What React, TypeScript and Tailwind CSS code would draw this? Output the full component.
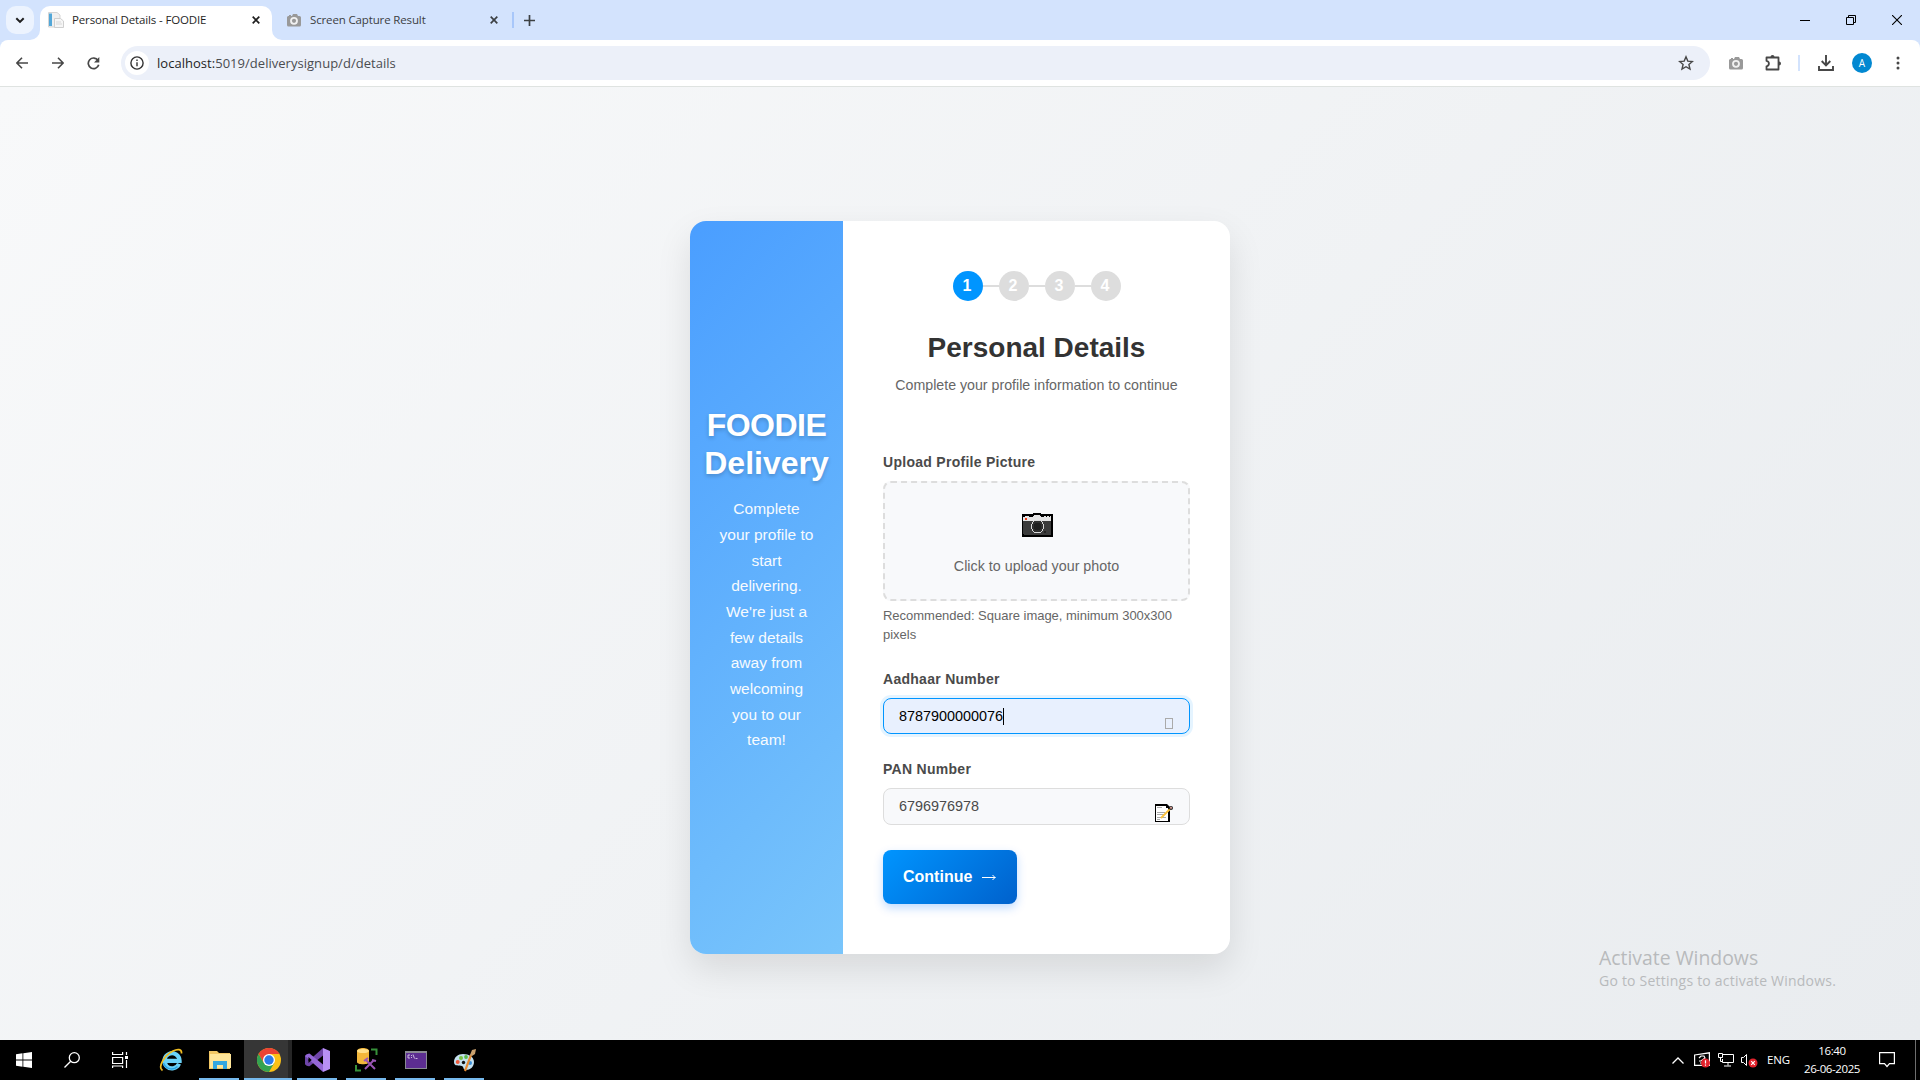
import React from "react";

const ui = "font-['Open_Sans','Noto_Sans',sans-serif]";

function CloseX({ color }: { color: string }) {
  return (
    <svg width="8" height="8" viewBox="0 0 8 8" stroke={color} strokeWidth="1.7">
      <path d="M.7 .7 7.3 7.3M7.3 .7.7 7.3" />
    </svg>
  );
}

function GrayCamera() {
  return (
    <svg width="14" height="14" viewBox="0 0 14 14">
      <path d="M1 3h1V2h2v1h1l1-2h4l1 2h1.500a1.500 1.500 0 0 1 1.500 1.500V12a1.500 1.500 0 0 1-1.500 1.500h-11A1.500 1.500 0 0 1 0 12V4z" fill="#999" />
      <circle cx="7" cy="7.800" r="3.900" fill="#f1f1f1" />
      <circle cx="7" cy="7.800" r="2.100" fill="#999" />
    </svg>
  );
}

function TabStrip() {
  return (
    <div className="flex h-10 w-full bg-[#d3e3fd]">
      <div className="mt-1.5 ml-1.5 flex size-7 shrink-0 items-center justify-center rounded-[10px] bg-[#ecf3fe]">
        <svg width="10" height="7" viewBox="0 0 10 7" fill="none" stroke="#1f1f1f" strokeWidth="2">
          <path d="M1.300 1.200 5 4.900 8.700 1.200" />
        </svg>
      </div>
      <div className="relative mt-1.5 ml-1.5 flex h-[34px] w-[232px] shrink-0 items-center rounded-t-[10px] bg-white pb-[6px] pl-2">
        <svg className="absolute -left-2.5 bottom-0" width="10" height="10"><path d="M10 0V10H0A10 10 0 0 0 10 0z" fill="#fff" /></svg>
        <svg className="absolute -right-2.5 bottom-0" width="10" height="10"><path d="M0 0V10H10A10 10 0 0 1 0 0z" fill="#fff" /></svg>
        <svg width="16" height="16" viewBox="0 0 16 16">
          <path d="M.5.5H9L12 3v12H.5z" fill="#f0f0f0" stroke="#d5d5d5" />
          <rect x="1" y="1.500" width="3" height="12.500" fill="#53a7d8" />
          <path d="M6.500 6.500h6l3 2.500v6.500h-9z" fill="#f6f6f6" stroke="#cfcfcf" />
          <path d="M8 10h5M8 12h6" stroke="#d8d8d8" />
        </svg>
        <span className={`${ui} ml-2 w-[176px] text-[11.500px] leading-4 tracking-[-0.140px] whitespace-nowrap text-[#1f1f1f]`}>Personal Details - FOODIE</span>
        <span className="ml-[4px]"><CloseX color="#1f1f1f" /></span>
      </div>
      <div className="ml-[15px] flex h-10 items-center">
        <GrayCamera />
        <span className={`${ui} ml-[9px] w-[180px] text-[11.500px] leading-4 tracking-[-0.140px] whitespace-nowrap text-[#3c4043]`}>Screen Capture Result</span>
        <CloseX color="#3c4043" />
        <div className="ml-[14px] h-4 w-[2px] bg-[#a8c7fa]" />
        <svg className="ml-[10px]" width="11" height="11" viewBox="0 0 11 11" stroke="#3c4043" strokeWidth="1.700"><path d="M5.500 0v11M0 5.500h11" /></svg>
      </div>
      <div className="mr-[18px] ml-auto flex h-10 items-center gap-9">
        <svg width="10" height="10" stroke="#000"><path d="M0 5.500h10" /></svg>
        <svg width="10" height="10" fill="none" stroke="#000"><path d="M.5 2.500h7v7h-7zM2.500 2.500v-2h7v7h-2" /></svg>
        <svg width="10" height="10" stroke="#000" strokeWidth="1.100"><path d="M0 0 10 10M10 0 0 10" /></svg>
      </div>
    </div>
  );
}

function Toolbar() {
  return (
    <div className="h-[47px] w-full bg-[#d3e3fd]">
      <div className="flex h-[47px] items-center rounded-t-[8px] border-b border-[#dfe3e1] bg-white pl-4">
        <svg width="12" height="12" viewBox="0 0 12 12" fill="none" stroke="#474747" strokeWidth="1.600"><path d="M12 6H1.200M6 .8.9 6 6 11.200" /></svg>
        <svg className="ml-6" width="12" height="12" viewBox="0 0 12 12" fill="none" stroke="#474747" strokeWidth="1.600"><path d="M0 6h10.800M6 .8 11.100 6 6 11.200" /></svg>
        <svg className="ml-[23px]" width="13" height="13" viewBox="0 0 13 13">
          <path d="M11 3.400A5.300 5.300 0 1 0 11.700 7.700" fill="none" stroke="#474747" strokeWidth="1.700" />
          <path d="M12.300 0v5.400H7z" fill="#474747" />
        </svg>
        <div className="ml-[21px] flex h-[34px] w-[1589px] items-center rounded-full bg-[#ecf0f9] pl-1">
          <div className="flex size-6 items-center justify-center rounded-full bg-white">
            <svg width="14" height="14" viewBox="0 0 14 14" fill="none" stroke="#333" strokeWidth="1.400"><circle cx="7" cy="7" r="6.100" /><path d="M7 6.300v3.900M7 3.600v1.500" /></svg>
          </div>
          <span className={`${ui} ml-2 text-[13px] leading-5 tracking-[0.030px] whitespace-nowrap text-[#4a4c50]`}><span className="text-[#1f1f1f]">localhost:</span>5019/deliverysignup/d/details</span>
          <svg className="mr-4 ml-auto" width="16" height="16" viewBox="0 0 16 16" fill="none" stroke="#474747" strokeWidth="1.400"><path d="m8 1.800 1.800 4.300 4.600.4-3.500 3 1.100 4.600L8 11.700l-4 2.400 1.100-4.600-3.500-3 4.600-.4z" /></svg>
        </div>
        <span className="ml-[19px]"><GrayCamera /></span>
        <svg className="ml-[21px]" width="18" height="18" viewBox="0 0 18 18">
          <path d="M2.500 3.500h12v12h-12v-3.200c3.200-.5 3.200-4.900 0-5.400z" fill="none" stroke="#474747" strokeWidth="1.800" strokeLinejoin="round" />
          <path d="M6.500 3a2 2 0 0 1 4 0zM15 7.500a2 2 0 0 1 0 4z" fill="#474747" />
        </svg>
        <div className="ml-[16px] h-4 w-[2px] bg-[#d3e3fd]" />
        <svg className="ml-[18px]" width="16" height="16" viewBox="0 0 16 16" fill="none" stroke="#474747" strokeWidth="1.900"><path d="M8 0v10M3.700 6 8 10.300 12.300 6M1 11v4h14v-4" /></svg>
        <div className={`${ui} ml-[18px] flex size-5 items-center justify-center rounded-full bg-[#0288d1] text-[10px] text-white`}>A</div>
        <svg className="ml-[24px]" width="4" height="14" fill="#474747"><circle cx="2" cy="2" r="1.500" /><circle cx="2" cy="7" r="1.500" /><circle cx="2" cy="12" r="1.500" /></svg>
      </div>
    </div>
  );
}

function Steps() {
  return (
    <div className="flex h-[30px] items-center justify-center text-base font-bold text-white">
      {["1", "2", "3", "4"].map((n, i) => (
        <React.Fragment key={n}>
          {i > 0 && <div className="h-[2px] w-4 bg-[#ddd]" />}
          <div className={`flex size-[30px] items-center justify-center rounded-full pr-[1px] ${i === 0 ? "bg-[#0095ff]" : "bg-[#ddd]"}`}>{n}</div>
        </React.Fragment>
      ))}
    </div>
  );
}

const label = "block h-[18px] text-[14px] leading-[18px] font-bold tracking-[0.280px] text-[#4a4a4a]";

function Camera() {
  return (
    <svg width="31" height="24" viewBox="0 0 31 24" shapeRendering="crispEdges">
      <path d="M0 1h11V0h8v1h12v23H0z" fill="#000" />
      <path d="M1 4h2V3h4v1h4V3h1V2h6v1h1v1h3V3h2v1h1V3h2v1h1V3h1v5H1z" fill="#e4e4e4" />
      <path d="M1 8h28v14H2v-1H1z" fill="#3b3b3b" />
      <rect x="3" y="5" width="2" height="2" fill="#f03a17" />
      <path d="M12 7h7v1h1v1h1v2h1v5h-1v2h-1v1h-1v1h-7v-1h-1v-1h-1v-2H9v-5h1V9h1V8h1z" fill="#d8d8d8" />
      <path d="M12 8h7v1h1v2h1v5h-1v2h-1v1h-7v-1h-1v-2h-1v-5h1V9h1z" fill="#2e2e2e" />
      <path d="M13 10h5v1h1v5h-1v1h-5v-1h-1v-5h1z" fill="#1e1e1e" />
      <rect x="22" y="18" width="2" height="2" fill="#222" />
    </svg>
  );
}

function Memo() {
  return (
    <svg width="18" height="18" viewBox="0 0 18 18">
      <path d="M0 0h12l3 3v15H0z" fill="#000" />
      <path d="M1 2h10v2h2v13H1z" fill="#fff" />
      <path d="M2 3.500h5M2 8.500h8M2 10.500h7M2 13.500h9M2 15.500h3" stroke="#aaa" />
      <path d="M6 14 15 5" stroke="#fbc13a" strokeWidth="1.800" />
      <circle cx="16" cy="4" r="2" fill="#222" />
      <circle cx="16" cy="3.800" r="1.100" fill="#d59a91" />
    </svg>
  );
}

function Card() {
  return (
    <div className="flex h-[733px] w-[540px] overflow-hidden rounded-[16px] bg-white font-['Liberation_Sans',Arial,sans-serif] shadow-[0_15px_35px_rgba(0,0,0,0.1)]">
      <div className="flex w-[153px] shrink-0 flex-col items-center bg-[linear-gradient(135deg,#4a9eff_0%,#79c5fb_100%)] pt-[185px] text-center text-white">
        <h1 className="text-[32px] leading-[38.400px] font-bold whitespace-nowrap [text-shadow:0_2px_4px_rgba(0,0,0,0.2)]"><span className="tracking-[-0.500px]">FOODIE</span><br />Delivery</h1>
        <p className="mt-[13.500px] text-[15.500px] leading-[25.670px] font-normal whitespace-nowrap opacity-95">
          Complete<br />your profile to<br />start<br />delivering.<br />We're just a<br />few details<br />away from<br />welcoming<br />you to our<br />team!
        </p>
      </div>
      <div className="flex w-[387px] flex-col px-10 pt-[50px]">
        <Steps />
        <h2 className="mt-[31px] text-center text-[28px] leading-8 font-bold text-[#333]">Personal Details</h2>
        <p className="mt-[11px] text-center text-[14.200px] leading-5 whitespace-nowrap text-[#666]">Complete your profile information to continue</p>
        <span className={`${label} mt-[58px]`}>Upload Profile Picture</span>
        <div className="mt-[10px] flex h-[120px] flex-col items-center rounded-[8px] border-2 border-dashed border-[#ddd] bg-[#f8f9fb] pt-[30px]">
          <span className="ml-[2px] block"><Camera /></span>
          <span className="mt-[19px] text-[14.300px] leading-5 text-[#666]">Click to upload your photo</span>
        </div>
        <p className="mt-[5px] h-[38px] text-[13px] leading-[19px] tracking-[-0.020px] whitespace-nowrap text-[#666]">Recommended: Square image, minimum 300x300<br />pixels</p>
        <span className={`${label} mt-[26px]`}>Aadhaar Number</span>
        <div className="mt-[10px] flex h-9 items-center rounded-[8px] border border-[#0095ff] bg-[#e8f0fe] pl-[15px] text-[14.400px] text-black shadow-[0_0_0_3px_rgba(0,149,255,0.1)]">
          <span className="mt-[2px]">8787900000076</span>
          <div className="h-[17px] w-px bg-black" />
          <div className="mt-[16px] mr-4 mb-px ml-auto h-[11px] w-2 border border-[#aaa]" />
        </div>
        <span className={`${label} mt-[26px]`}>PAN Number</span>
        <div className="mt-[10px] flex h-[37px] items-center rounded-[8px] border border-[#ddd] bg-[#f8f9fb] pl-[15px] text-[14.400px] text-[#4a4a4a]">
          <span className="mt-px">6796976978</span>
          <span className="mt-[13px] mr-4 ml-auto"><Memo /></span>
        </div>
        <button className="mt-[25px] flex h-[54px] w-[134px] items-center rounded-[8px] bg-[linear-gradient(135deg,#0095ff_0%,#0061cc_100%)] pl-5 text-base font-bold text-white shadow-[0_4px_10px_rgba(0,110,255,0.25)]">
          <span>Continue</span>
          <svg className="mt-[1px] ml-[10px]" width="14" height="7" viewBox="0 0 14 7" fill="none" stroke="#fff"><path d="M0 3.500h13.500M10.500 1l2.500 2.500L10.500 6" /></svg>
        </button>
      </div>
    </div>
  );
}

function Slot({ bar, active, children }: { bar?: boolean; active?: boolean; children: React.ReactNode }) {
  return (
    <div className="relative flex h-10 w-[49px] shrink-0 items-center justify-center">
      {active && <div className="absolute inset-y-0 left-0 w-12 border-r-4 border-[#262626] bg-[#363636]" />}
      <div className="relative">{children}</div>
      {bar && <div className={`absolute bottom-0 h-[2px] bg-[#76b9ed] ${active ? "left-0 w-12" : "left-1 w-10"}`} />}
    </div>
  );
}

function Taskbar() {
  return (
    <div className="flex h-10 w-full shrink-0 items-center bg-black text-white">
      <svg className="ml-4" width="16" height="16" viewBox="0 0 16 16" fill="#fff"><path d="M0 2.200 6.500 1.300v6.200H0zM7.300 1.200 16 0v7.500H7.300zM0 8.400h6.500v6.300L0 13.800zM7.300 8.400H16V16l-8.700-1.200z" /></svg>
      <svg className="ml-8" width="16" height="16" viewBox="0 0 16 16" fill="none" stroke="#fff" strokeWidth="1.300"><circle cx="10.300" cy="5.700" r="5" /><path d="M6.700 9.300.5 15.500" /></svg>
      <svg className="mr-[18px] ml-8" width="16" height="16" viewBox="0 0 16 16" fill="none" stroke="#fff" strokeWidth="1.200"><path d="M.6 0v2.500h10V0M.6 5.500h10v6h-10zM.6 16v-2h10v2M14.500 0v3M14.500 8v8" /><path d="M13 4h3v3h-3z" fill="#fff" stroke="none" /></svg>
      <Slot>
        <svg width="24" height="24" viewBox="0 0 24 24" fill="none">
          <path d="M20 15.800A7.600 7.600 0 1 1 20.600 12.800H7.500" stroke="#6bd3f8" strokeWidth="4.200" />
          <path d="M18.500 18.500A8.500 8.500 0 0 1 4.500 15" stroke="#2aa5e4" strokeWidth="1.500" />
          <path d="M3.500 22.500C-1.500 19 5 7.500 14 3c4.500-2.200 9-2.200 8.500 2.500" stroke="#f0bd22" strokeWidth="1.700" />
        </svg>
      </Slot>
      <Slot bar>
        <svg width="22" height="20" viewBox="0 0 22 20"><path d="M0 1h8l2 2h11v16H0z" fill="#f2c764" /><path d="M1 4h21v14H1z" fill="#ffe599" /><path d="M4 11h14v8h-4v-4H8v4H4z" fill="#35a7e0" /></svg>
        <div className="absolute -bottom-[10px] left-[24px] h-[2px] w-2" />
      </Slot>
      <Slot bar active>
        <svg width="24" height="24" viewBox="0 0 24 24">
          <circle cx="12" cy="12" r="12" fill="#fbc116" />
          <path d="M1.600 6A12 12 0 0 1 22.400 6H12L6.800 15z" fill="#ea4335" />
          <path d="M1.600 6A12 12 0 0 0 12 24l5.200-9H6.800z" fill="#34a351" />
          <circle cx="12" cy="12" r="6" fill="#fff" /><circle cx="12" cy="12" r="4.700" fill="#2a7be9" />
        </svg>
      </Slot>
      <Slot bar>
        <svg width="25" height="24" viewBox="0 0 25 24">
          <path d="M18 0 25 3v18l-7 3z" fill="#b890f5" />
          <path d="M0 8 3.500 5.500v13L0 16z" fill="#6b46a8" />
          <path d="M18 0v7.500L4.500 18.300 1.300 17.500 0 16z" fill="#6f45a9" />
          <path d="M0 8l1.300-1.500 3.200-.9L18 16.500V24z" fill="#9467d6" />
          <path d="M3.500 9v6l3.200-3z" fill="#000" />
        </svg>
      </Slot>
      <Slot bar>
        <svg width="23" height="24" viewBox="0 0 23 24" fill="none"><path d="M2 3c0-4 12-4 12 0v11c0 3-12 3-12 0z" fill="#f3b73b" /><ellipse cx="8" cy="3" rx="6" ry="2" fill="#ffe08a" /><path d="M16 1.500h5.500V7M1 17v5.500h5" stroke="#37913a" strokeWidth="2" /><path d="m10 21 9-9M11 12l9 9M9 13l4-3M17 12l4 1" stroke="#9b55b5" strokeWidth="2" /></svg>
      </Slot>
      <Slot bar>
        <svg width="22" height="18" viewBox="0 0 22 18"><rect width="22" height="18" fill="#8a8a94" /><rect x="1" y="2" width="20" height="15" fill="#5c2d91" /><path d="M5 4H3v3h2M6.500 4v1M6.500 6v1M8 3.500l1.500 4M10.500 7.500h2" stroke="#e5daf0" fill="none" strokeWidth=".8" /></svg>
      </Slot>
      <Slot bar>
        <svg width="24" height="24" viewBox="0 0 24 24"><path d="M10 6c6 0 11 3 11 8s-4 8-8 8c-3 0-2-3-4-4-3-1-8 1-8-4s4-8 9-8z" fill="#c4e0ef" /><circle cx="8" cy="10" r="2" fill="#7ac143" /><circle cx="13" cy="9" r="1.900" fill="#58b947" /><circle cx="4.700" cy="14" r="2" fill="#ef5b3c" /><circle cx="17" cy="15" r="2" fill="#398fdb" /><circle cx="10.500" cy="14.500" r="1.700" fill="#111" /><path d="m12 23 6-16" stroke="#e58a32" strokeWidth="2.200" /><path d="m17 7 2-5 4-1-1 5-3 2z" fill="#c9a06d" /></svg>
      </Slot>
      <svg className="ml-auto" width="12" height="7" viewBox="0 0 12 7" fill="none" stroke="#fff" strokeWidth="1.300"><path d="M.5 6.500 6 1l5.500 5.500" /></svg>
      <svg className="ml-[10px]" width="17" height="16" viewBox="0 0 17 16" fill="none" stroke="#fff" strokeWidth="1.200"><path d="M.6 3 15.400.8v12.500L.6 13.300zM5 6l2-2h3l1 2-4 3H5M8 9l3-1v3H6" /><circle cx="11.500" cy="11" r="4.500" fill="#e2222c" stroke="none" /><path d="M11.500 8.300v3.200M11.500 12.500v1.200" /></svg>
      <svg className="ml-[7px]" width="16" height="14" viewBox="0 0 16 14" fill="none" stroke="#fff"><path d="M4.500 1.500h11v8h-11V6M.5.500h4v4h-4zM2.500 4.500v4h2M10 9.500v3M6 13h7" /></svg>
      <svg className="ml-[7px]" width="17" height="16" viewBox="0 0 17 16" fill="none" stroke="#fff"><path d="M.5 5.500h2l3-3v11l-3-3h-2z" /><circle cx="12" cy="11" r="4.500" fill="#e2222c" stroke="none" /><path d="m10.200 9.200 3.600 3.600M13.800 9.200l-3.600 3.600" strokeWidth="1.200" /></svg>
      <span className={`${ui} ml-[9px] w-[24px] text-[11.500px] leading-4 tracking-[-0.100px]`}>ENG</span>
      <div className={`${ui} mb-px ml-[9px] w-[64px] text-center text-[11.500px] leading-[18px] tracking-[-0.400px] whitespace-nowrap`}>16:40<br />26-06-2025</div>
      <svg className="ml-[15px]" width="16" height="16" viewBox="0 0 16 16" fill="none" stroke="#fff" strokeWidth="1.200"><path d="M.6.600h14.800v11H10.500L8 14.500l-2.500-2.900H.6z" /></svg>
      <div className="mr-1 ml-5 h-10 w-px bg-[#6e6e6e]" />
    </div>
  );
}

export default function App() {
  return (
    <div className="flex h-[1080px] w-[1920px] flex-col overflow-hidden bg-white">
      <TabStrip />
      <Toolbar />
      <main className="relative flex h-[953px] justify-center bg-[linear-gradient(135deg,#f8f9fa_0%,#e9ecef_100%)] pt-[134px]">
        <Card />
        <div className={`${ui} absolute top-[857px] left-[1599px] whitespace-nowrap text-[#b8babc]`}>
          <div className="text-[19.400px] leading-7">Activate Windows</div>
          <div className="mt-px text-[14px] leading-4 tracking-[0.220px]">Go to Settings to activate Windows.</div>
        </div>
      </main>
      <Taskbar />
    </div>
  );
}
